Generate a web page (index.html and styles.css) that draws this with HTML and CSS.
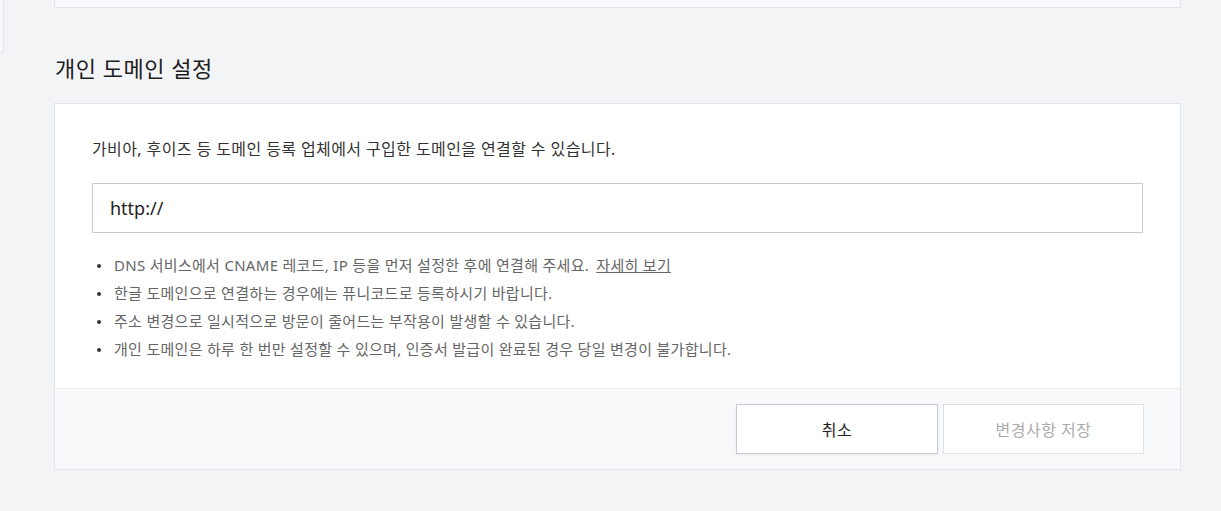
FILE: index.html
```html
<!DOCTYPE html>
<html lang="ko">
<head>
<meta charset="utf-8">
<link rel="stylesheet" href="styles.css">
</head>
<body>
<div class="page">
  <div class="side-stub"></div>
  <main class="main">
    <div class="top-card"></div>
    <h2 class="section-title">개인 도메인 설정</h2>
    <section class="card">
      <div class="card-body">
        <p class="desc">가비아, 후이즈 등 도메인 등록 업체에서 구입한 도메인을 연결할 수 있습니다.</p>
        <input class="domain-input" type="text" value="http://">
        <ul class="notes">
          <li>DNS 서비스에서 CNAME 레코드, IP 등을 먼저 설정한 후에 연결해 주세요. <a class="more" href="#">자세히 보기</a></li>
          <li>한글 도메인으로 연결하는 경우에는 퓨니코드로 등록하시기 바랍니다.</li>
          <li>주소 변경으로 일시적으로 방문이 줄어드는 부작용이 발생할 수 있습니다.</li>
          <li>개인 도메인은 하루 한 번만 설정할 수 있으며, 인증서 발급이 완료된 경우 당일 변경이 불가합니다.</li>
        </ul>
      </div>
      <div class="card-footer">
        <button class="btn btn-cancel" type="button">취소</button>
        <button class="btn btn-save" type="button" disabled>변경사항 저장</button>
      </div>
    </section>
  </main>
</div>
</body>
</html>
```
FILE: styles.css
```css
* { box-sizing: border-box; }
html, body {
  margin: 0;
  padding: 0;
  background: #f3f4f6;
  font-family: "Noto Sans", "Noto Sans CJK KR", sans-serif;
  color: #222;
}
.page {
  display: flex;
  align-items: flex-start;
  height: 511px;
  overflow: hidden;
}
.side-stub {
  width: 4px;
  height: 53px;
  background: #f8f9fb;
  border-right: 1px solid #e1e4e8;
  border-bottom: 1px solid #e1e4e8;
  flex: none;
}
.main {
  margin-left: 50px;
  width: 1127px;
}
.top-card {
  height: 8px;
  background: #f8f9fb;
  border: 1px solid #e1e4e8;
  border-top: none;
}
.section-title {
  margin: 0;
  padding: 43px 0 0 1px;
  height: 95px;
  font-size: 22px;
  letter-spacing: 0.5px;
  font-weight: 400;
  line-height: 34px;
  color: #1e1e1e;
}
.card {
  background: #fff;
  border: 1px solid #e1e4e8;
}
.card-body {
  padding: 32px 37px 25px 37px;
}
.desc {
  margin: 0;
  font-size: 16px;
  letter-spacing: 0.4px;
  line-height: 26px;
  color: #333;
}
.domain-input {
  display: block;
  width: 100%;
  height: 50px;
  margin-top: 21px;
  padding: 0 17px;
  border: 1px solid #c5ccd6;
  border-radius: 0;
  font-family: "Noto Sans", "Noto Sans CJK KR", sans-serif;
  font-size: 18px;
  color: #222;
  outline: none;
}
.notes {
  list-style: none;
  margin: 18px 0 0 0;
  padding: 0;
}
.notes li {
  position: relative;
  padding-left: 22px;
  font-size: 15px;
  letter-spacing: 0.3px;
  line-height: 28px;
  color: #666;
}
.notes li::before {
  content: "";
  position: absolute;
  left: 5px;
  top: 13px;
  width: 4px;
  height: 4px;
  border-radius: 50%;
  background: #333;
}
.more {
  color: #666;
  text-decoration: underline;
  margin-left: 3px;
}
.card-footer {
  display: flex;
  justify-content: flex-end;
  gap: 5px;
  padding: 15px 36px 15px 0;
  background: #f8f9fb;
  border-top: 1px solid #e8ebef;
}
.btn {
  width: 202px;
  height: 50px;
  background: #fff;
  font-family: "Noto Sans", "Noto Sans CJK KR", sans-serif;
  font-size: 16px;
  letter-spacing: 0.5px;
  border-radius: 0;
  cursor: pointer;
}
.btn-cancel {
  border: 1px solid #c5ccd6;
  color: #222;
  box-shadow: 0 1px 2px rgba(0,0,0,0.08);
}
.btn-save {
  border: 1px solid #dde1e7;
  color: #aaa;
  width: 201px;
}
```
